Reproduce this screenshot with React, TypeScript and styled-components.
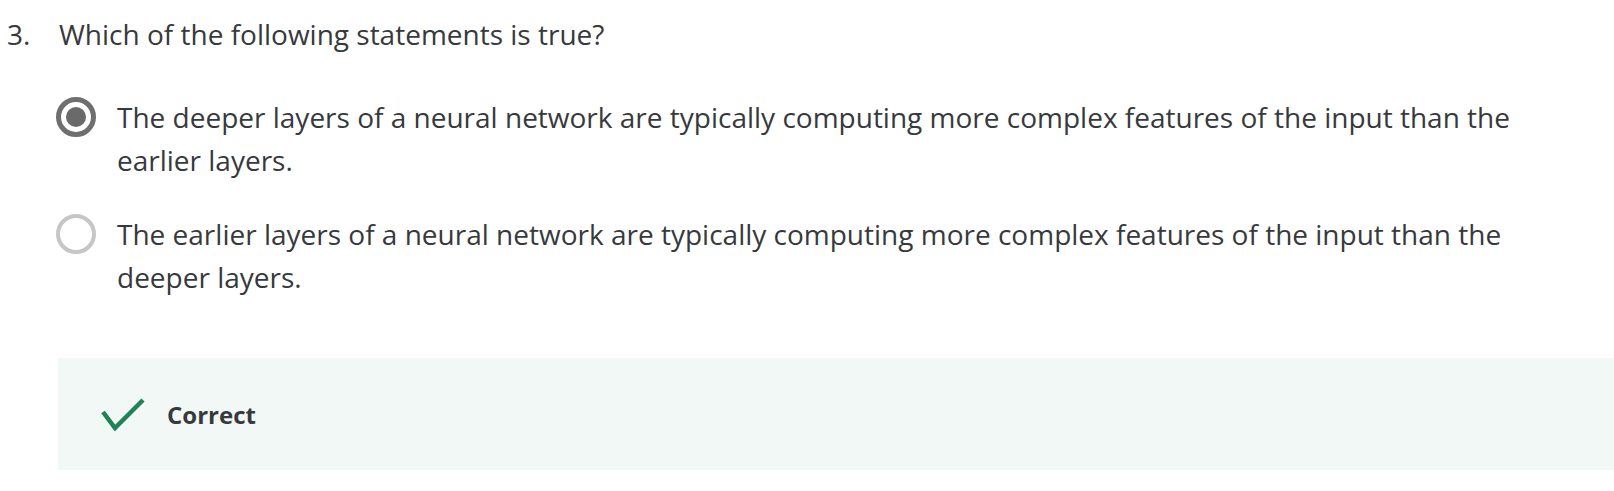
import React from "react";
import styled, { createGlobalStyle } from "styled-components";

const GlobalStyle = createGlobalStyle`
  body {
    margin: 0;
    background: #ffffff;
    font-family: "Open Sans", "Noto Sans", Arial, sans-serif;
    color: #373a3c;
  }
`;

const Page = styled.div`
  padding: 13px 0 0 7px;
  width: 1614px;
  box-sizing: border-box;
  overflow: hidden;
`;

const QuestionRow = styled.div`
  display: flex;
  font-size: 28px;
  line-height: 43px;
`;

const Number = styled.span`
  width: 52px;
  flex-shrink: 0;
`;

const Options = styled.div`
  display: flex;
  flex-direction: column;
  gap: 31px;
  margin: 40px 0 0 49px;
`;

const Option = styled.label`
  display: flex;
  align-items: flex-start;
  gap: 21px;
  cursor: pointer;
`;

const Radio = styled.span<{ $checked?: boolean }>`
  width: 40px;
  height: 40px;
  margin-top: 1px;
  flex-shrink: 0;
  box-sizing: border-box;
  border-radius: 50%;
  border: ${(p) => (p.$checked ? "5px solid #6f6f6f" : "4px solid #c6c6c6")};
  display: flex;
  align-items: center;
  justify-content: center;

  &::after {
    content: "";
    display: ${(p) => (p.$checked ? "block" : "none")};
    width: 20px;
    height: 20px;
    border-radius: 50%;
    background: #6a6a6a;
  }
`;

const OptionText = styled.span`
  font-size: 28px;
  line-height: 43px;
  max-width: 1440px;
`;

const Feedback = styled.div`
  margin: 59px 0 0 51px;
  height: 112px;
  background: #f2f8f6;
  display: flex;
  align-items: center;
  padding-left: 43px;
  gap: 22px;
`;

const FeedbackLabel = styled.span`
  font-size: 24px;
  font-weight: 700;
  color: #373a3c;
`;

const CheckIcon = () => (
  <svg width="44" height="34" viewBox="0 0 44 34" fill="none">
    <polyline
      points="2,15 14,31 42,3"
      stroke="#1f8354"
      strokeWidth="4.5"
      fill="none"
    />
  </svg>
);

const options = [
  {
    text: "The deeper layers of a neural network are typically computing more complex features of the input than the earlier layers.",
    checked: true,
  },
  {
    text: "The earlier layers of a neural network are typically computing more complex features of the input than the deeper layers.",
    checked: false,
  },
];

export default function App() {
  return (
    <>
      <GlobalStyle />
      <Page>
        <QuestionRow>
          <Number>3.</Number>
          <span>Which of the following statements is true?</span>
        </QuestionRow>
        <Options>
          {options.map((o) => (
            <Option key={o.text}>
              <Radio $checked={o.checked} />
              <OptionText>{o.text}</OptionText>
            </Option>
          ))}
        </Options>
        <Feedback>
          <CheckIcon />
          <FeedbackLabel>Correct</FeedbackLabel>
        </Feedback>
      </Page>
    </>
  );
}
